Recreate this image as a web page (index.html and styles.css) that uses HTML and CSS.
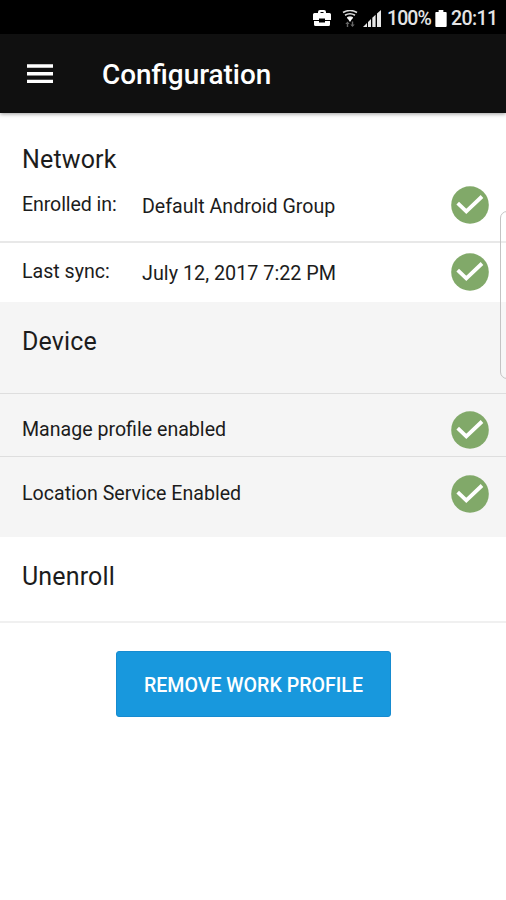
FILE: index.html
```html
<!DOCTYPE html>
<html lang="en">
<head>
<meta charset="utf-8">
<title>Configuration</title>
<link rel="stylesheet" href="styles.css">
</head>
<body>
<svg class="defs" width="0" height="0">
  <symbol id="check" viewBox="0 0 38 38">
    <circle cx="19" cy="19" r="18.8" fill="#81a969"/>
    <path d="M6.700 17.200 15.300 25.300 31 10.500" fill="none" stroke="#fff" stroke-width="3.800"/>
  </symbol>
</svg>
<div class="statusbar">
  <svg class="briefcase" width="18" height="17" viewBox="0 0 18 17">
    <path d="M5 3V2q0-2 2-2h4q2 0 2 2v1h3.500q1.500 0 1.500 1.500V10h-6V8.500H6V10H0V4.500Q0 3 1.500 3zM7.500 3h3V2h-3zM1 11h5v1.500h6V11h5v3.500q0 1.500-1.500 1.500h-13Q1 16 1 14.500z" fill="#fff"/>
  </svg>
  <svg class="wifi" width="16" height="18" viewBox="0 0 16 18">
    <path d="M1 2.500q7-4 14 0M3 5.300q5-3 10 0M5.300 8q2.700-1.800 5.400 0" fill="none" stroke="#ddd" stroke-width="1.600"/>
    <path d="M5 7.500h6L8 12z" fill="#fff"/>
    <path d="M3.300 14 5.500 11.500 7.700 14H6.200v3H4.800v-3zM8.300 14.500h1.500v-3h1.400v3h1.500L10.500 17z" fill="#666"/>
  </svg>
  <svg class="signal" width="19" height="18" viewBox="0 0 19 18">
    <path d="M0 17 4 13v4zM5 12l3-2.900V17H5zM9.300 7.800 12.600 4.800V17H9.300zM14 3.500 18 0v17h-4z" fill="#e8e8e8"/>
  </svg>
  <span class="percent">100%</span>
  <svg class="battery" width="12" height="17" viewBox="0 0 12 18">
    <path d="M3.500 0h5v2H11q1 0 1 1v14q0 1-1 1H1q-1 0-1-1V3q0-1 1-1h2.500z" fill="#fff"/>
  </svg>
  <span class="clock">20:11</span>
</div>
<header class="appbar">
  <svg width="28" height="20" viewBox="0 0 28 20">
    <path d="M1 2h26M1 9.700h26M1 17.400h26" stroke="#fff" stroke-width="3.400"/>
  </svg>
  <h1>Configuration</h1>
</header>
<main>
  <section class="network">
    <h2>Network</h2>
    <div class="row enrolled"><span class="label">Enrolled in:</span><span class="value">Default Android Group</span><svg class="check"><use href="#check"/></svg></div>
    <div class="row sync"><span class="label">Last sync:</span><span class="value date">July 12, 2017 7:22 PM</span><svg class="check"><use href="#check"/></svg></div>
  </section>
  <section class="device">
    <h2>Device</h2>
    <div class="row manage"><span>Manage profile enabled</span><svg class="check"><use href="#check"/></svg></div>
    <div class="row location"><span>Location Service Enabled</span><svg class="check"><use href="#check"/></svg></div>
  </section>
  <section class="unenroll">
    <h2>Unenroll</h2>
    <button>REMOVE WORK PROFILE</button>
  </section>
</main>
<div class="edge-handle"></div>
</body>
</html>
```
FILE: styles.css
```css
* { box-sizing: border-box; }
body {
  margin: 0;
  position: relative;
  width: 506px;
  height: 900px;
  overflow: hidden;
  background: #fff;
  color: #1c1c1c;
  font-family: Roboto, "Liberation Sans", sans-serif;
  font-size: 20px;
}
.defs { display: block; }
svg { flex: none; }
.statusbar {
  height: 34px;
  background: #000;
  color: #e4e4e4;
  display: flex;
  align-items: center;
  padding: 3px 0 0 313px;
  white-space: nowrap;
  font-size: 19.5px;
  font-weight: 500;
}
.wifi { margin-left: 11px; }
.signal { margin-left: 5px; }
.percent { margin-left: 5px; width: 48px; letter-spacing: -0.9px; }
.clock { margin-left: 4px; letter-spacing: -0.6px; }
.appbar {
  height: 79px;
  background: #101010;
  color: #fff;
  display: flex;
  align-items: center;
  padding: 0 0 0 26px;
  position: relative;
  box-shadow: 0 1px 4px rgba(0, 0, 0, .4);
}
h1 {
  margin: 2px 0 0 48px;
  font-size: 27.9px;
  font-weight: 500;
  line-height: 32px;
}
h2 {
  margin: 0;
  font-size: 25px;
  font-weight: 400;
  line-height: 30px;
  letter-spacing: .15px;
}
.network { height: 189px; padding-top: 32px; }
.network h2, .device h2, .unenroll h2 { padding-left: 22px; }
.row {
  display: flex;
  align-items: center;
  padding: 0 17px 0 22px;
  font-size: 19.6px;
}
.label { width: 120px; padding-bottom: 1px; }
.enrolled .label { letter-spacing: -.1px; }
.value { padding-top: 3px; }
.date { font-size: 19.8px; }
.check { width: 38px; height: 38px; margin-left: auto; }
.enrolled { height: 68px; padding-bottom: 6px; border-bottom: 2px solid #e8e8e8; }
.enrolled .value { padding-top: 2px; }
.enrolled .label { padding-bottom: 2px; }
.sync { height: 59px; padding-bottom: 1px; }
.device { height: 235px; background: #f5f5f5; }
.device h2 { height: 91px; padding-top: 25px; }
.manage, .location { border-top: 1px solid #dedede; }
.manage { height: 63px; padding-top: 9px; }
.manage span { padding-bottom: 1px; }
.location { height: 74px; }
.location span { padding-bottom: 1px; }
.unenroll h2 { height: 86px; padding-top: 25px; border-bottom: 2px solid #f0f0f0; }
button {
  display: block;
  width: 275px;
  height: 66px;
  margin: 28px 0 0 116px;
  padding: 2px 0 0;
  border: 1px solid #168bd0;
  border-radius: 3px;
  background: #1898dd;
  color: #fff;
  font: 500 19.6px Roboto, sans-serif;
}
.edge-handle {
  position: absolute;
  left: 500px;
  top: 211px;
  width: 16px;
  height: 168px;
  border: 1px solid #c4c4c4;
  border-radius: 7px;
  background: rgba(255, 255, 255, .2);
}
```
